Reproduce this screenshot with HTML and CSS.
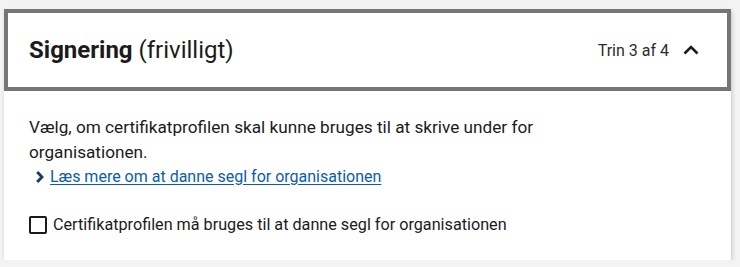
FILE: index.html
```html
<!DOCTYPE html>
<html lang="da">
<head>
<meta charset="utf-8">
<title>Signering</title>
<link rel="stylesheet" href="styles.css">
</head>
<body>
<section class="card">
  <header class="card-head">
    <h2 class="title"><strong>Signering</strong> <span class="opt">(frivilligt)</span></h2>
    <div class="step">
      <span class="step-text">Trin 3 af 4</span>
      <svg class="chev-up" width="16" height="10" viewBox="0 0 16 10" aria-hidden="true"><path d="M1.5 8.5 L8 2 L14.5 8.5" fill="none" stroke="#1b1b1b" stroke-width="2.6"/></svg>
    </div>
  </header>
  <div class="card-body">
    <p class="desc">Vælg, om certifikatprofilen skal kunne bruges til at skrive under for organisationen.</p>
    <div class="more">
      <svg class="chev-right" width="10" height="14" viewBox="0 0 10 14" aria-hidden="true"><path d="M2.2 2 L7 7 L2.2 12" fill="none" stroke="#1a3a66" stroke-width="2.8"/></svg>
      <a href="#" class="more-link">Læs mere om at danne segl for organisationen</a>
    </div>
    <label class="check">
      <span class="box"></span>
      <span class="check-label">Certifikatprofilen må bruges til at danne segl for organisationen</span>
    </label>
  </div>
</section>
</body>
</html>
```

FILE: styles.css
```css
html, body {
  margin: 0;
  padding: 0;
}
body {
  background: #f3f3f3;
  font-family: Roboto, "Liberation Sans", sans-serif;
  color: #1b1b1b;
  padding: 9px 9px 0 4px;
}
.card {
  width: 727px;
  background: #fff;
  box-shadow: 1px 2px 4px rgba(0, 0, 0, 0.18);
}
.card-head {
  box-sizing: border-box;
  height: 82px;
  border: 4px solid #767676;
  display: flex;
  align-items: center;
  justify-content: space-between;
  padding: 0 28px 0 21px;
}
.title {
  margin: 0;
  font-size: 24px;
  line-height: 32px;
  font-weight: 400;
  color: #1b1b1b;
}
.title strong {
  font-weight: 700;
}
.step {
  display: flex;
  align-items: center;
  gap: 14px;
}
.step-text {
  font-size: 16px;
  color: #2b2b2b;
}
.chev-up {
  display: block;
}
.card-body {
  padding: 24px 25px 23px 25px;
}
.desc {
  margin: 0;
  max-width: 580px;
  font-size: 17.2px;
  line-height: 25px;
}
.more {
  display: flex;
  align-items: center;
  gap: 5px;
  padding-left: 6px;
  font-size: 16px;
  line-height: 24px;
}
.chev-right {
  display: block;
}
.more-link {
  color: #0b5cad;
  text-decoration: underline;
  text-underline-offset: 2px;
}
.check {
  display: flex;
  align-items: center;
  gap: 6px;
  margin-top: 24px;
  font-size: 16.2px;
  line-height: 24px;
}
.box {
  box-sizing: border-box;
  width: 18px;
  height: 18px;
  border: 2px solid #1b1b1b;
  border-radius: 2px;
  background: #fff;
}
```
